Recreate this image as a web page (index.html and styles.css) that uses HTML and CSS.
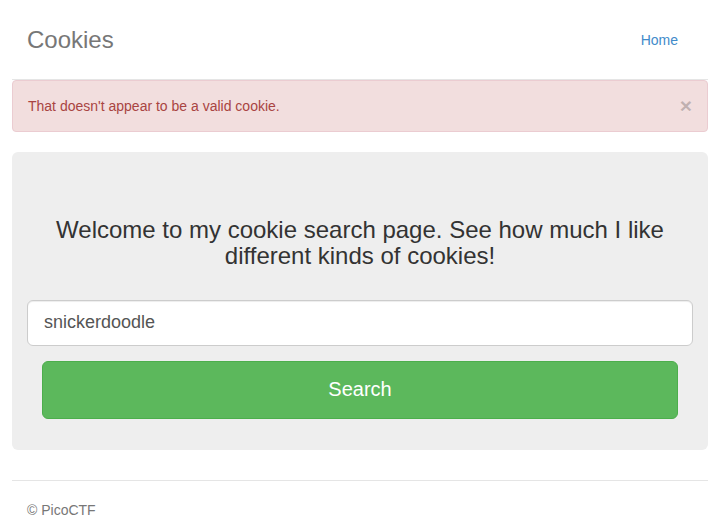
FILE: index.html
```html
<!DOCTYPE html>
<html>
<head>
<meta charset="utf-8">
<title>Cookies</title>
<link rel="stylesheet" href="styles.css">
</head>
<body>
<div class="container">
  <div class="header">
    <h3 class="brand">Cookies</h3>
    <nav class="nav"><a href="#" class="nav-link">Home</a></nav>
  </div>
  <div class="alert">
    <span class="alert-text">That doesn't appear to be a valid cookie.</span>
    <button class="close" type="button">&times;</button>
  </div>
  <div class="jumbotron">
    <h3 class="lead">Welcome to my cookie search page. See how much I like different kinds of cookies!</h3>
    <form class="search-form">
      <input class="input" type="text" value="snickerdoodle">
      <div class="btn-row"><button class="btn" type="button">Search</button></div>
    </form>
  </div>
  <footer class="footer">
    <p class="copy">&copy; PicoCTF</p>
  </footer>
</div>
</body>
</html>
```
FILE: styles.css
```css
html, body {
  margin: 0;
  padding: 0;
  background: #fff;
}
body {
  font-family: "Liberation Sans", Arial, sans-serif;
  font-size: 14px;
  line-height: 20px;
  color: #333;
}
.container {
  padding: 0 15px 0 12px;
}
.header {
  display: flex;
  align-items: center;
  justify-content: space-between;
  padding: 20px 15px;
  border-bottom: 1px solid #e5e5e5;
  height: 39px;
}
.brand {
  margin: 0;
  font-size: 24px;
  font-weight: 400;
  line-height: 40px;
  color: #777;
}
.nav-link {
  display: block;
  padding: 10px 15px;
  color: #428bca;
  text-decoration: none;
}
.alert {
  display: flex;
  align-items: center;
  justify-content: space-between;
  height: 20px;
  padding: 15px;
  border: 1px solid #ebccd1;
  border-radius: 4px;
  background: #f2dede;
  color: #a94442;
  margin-bottom: 20px;
}
.close {
  border: 0;
  background: transparent;
  padding: 0;
  height: 20px;
  font-family: "Liberation Sans", Arial, sans-serif;
  font-size: 21px;
  font-weight: 700;
  line-height: 20px;
  color: #000;
  opacity: 0.2;
  text-shadow: 0 1px 0 #fff;
  cursor: pointer;
}
.jumbotron {
  background: #eee;
  border-radius: 6px;
  padding: 65px 15px 31px;
  text-align: center;
  margin-bottom: 30px;
}
.lead {
  margin: 0 0 30px;
  font-size: 24px;
  font-weight: 400;
  line-height: 1.1;
  color: #333;
  padding: 0 28px;
}
.search-form {
  display: flex;
  flex-direction: column;
  gap: 15px;
}
.input {
  display: block;
  box-sizing: border-box;
  width: 100%;
  height: 46px;
  padding: 10px 16px;
  font-family: "Liberation Sans", Arial, sans-serif;
  font-size: 18px;
  color: #555;
  background: #fff;
  border: 1px solid #ccc;
  border-radius: 6px;
  box-shadow: inset 0 1px 1px rgba(0,0,0,.075);
  outline: none;
}
.btn-row {
  padding: 0 15px;
}
.btn {
  display: block;
  box-sizing: border-box;
  width: 100%;
  height: 58px;
  font-family: "Liberation Sans", Arial, sans-serif;
  font-size: 20px;
  color: #fff;
  background: #5cb85c;
  border: 1px solid #4cae4c;
  border-radius: 6px;
  cursor: pointer;
}
.footer {
  border-top: 1px solid #e5e5e5;
  padding: 19px 15px 0;
  color: #777;
}
.copy {
  margin: 0 0 10px;
}
```
